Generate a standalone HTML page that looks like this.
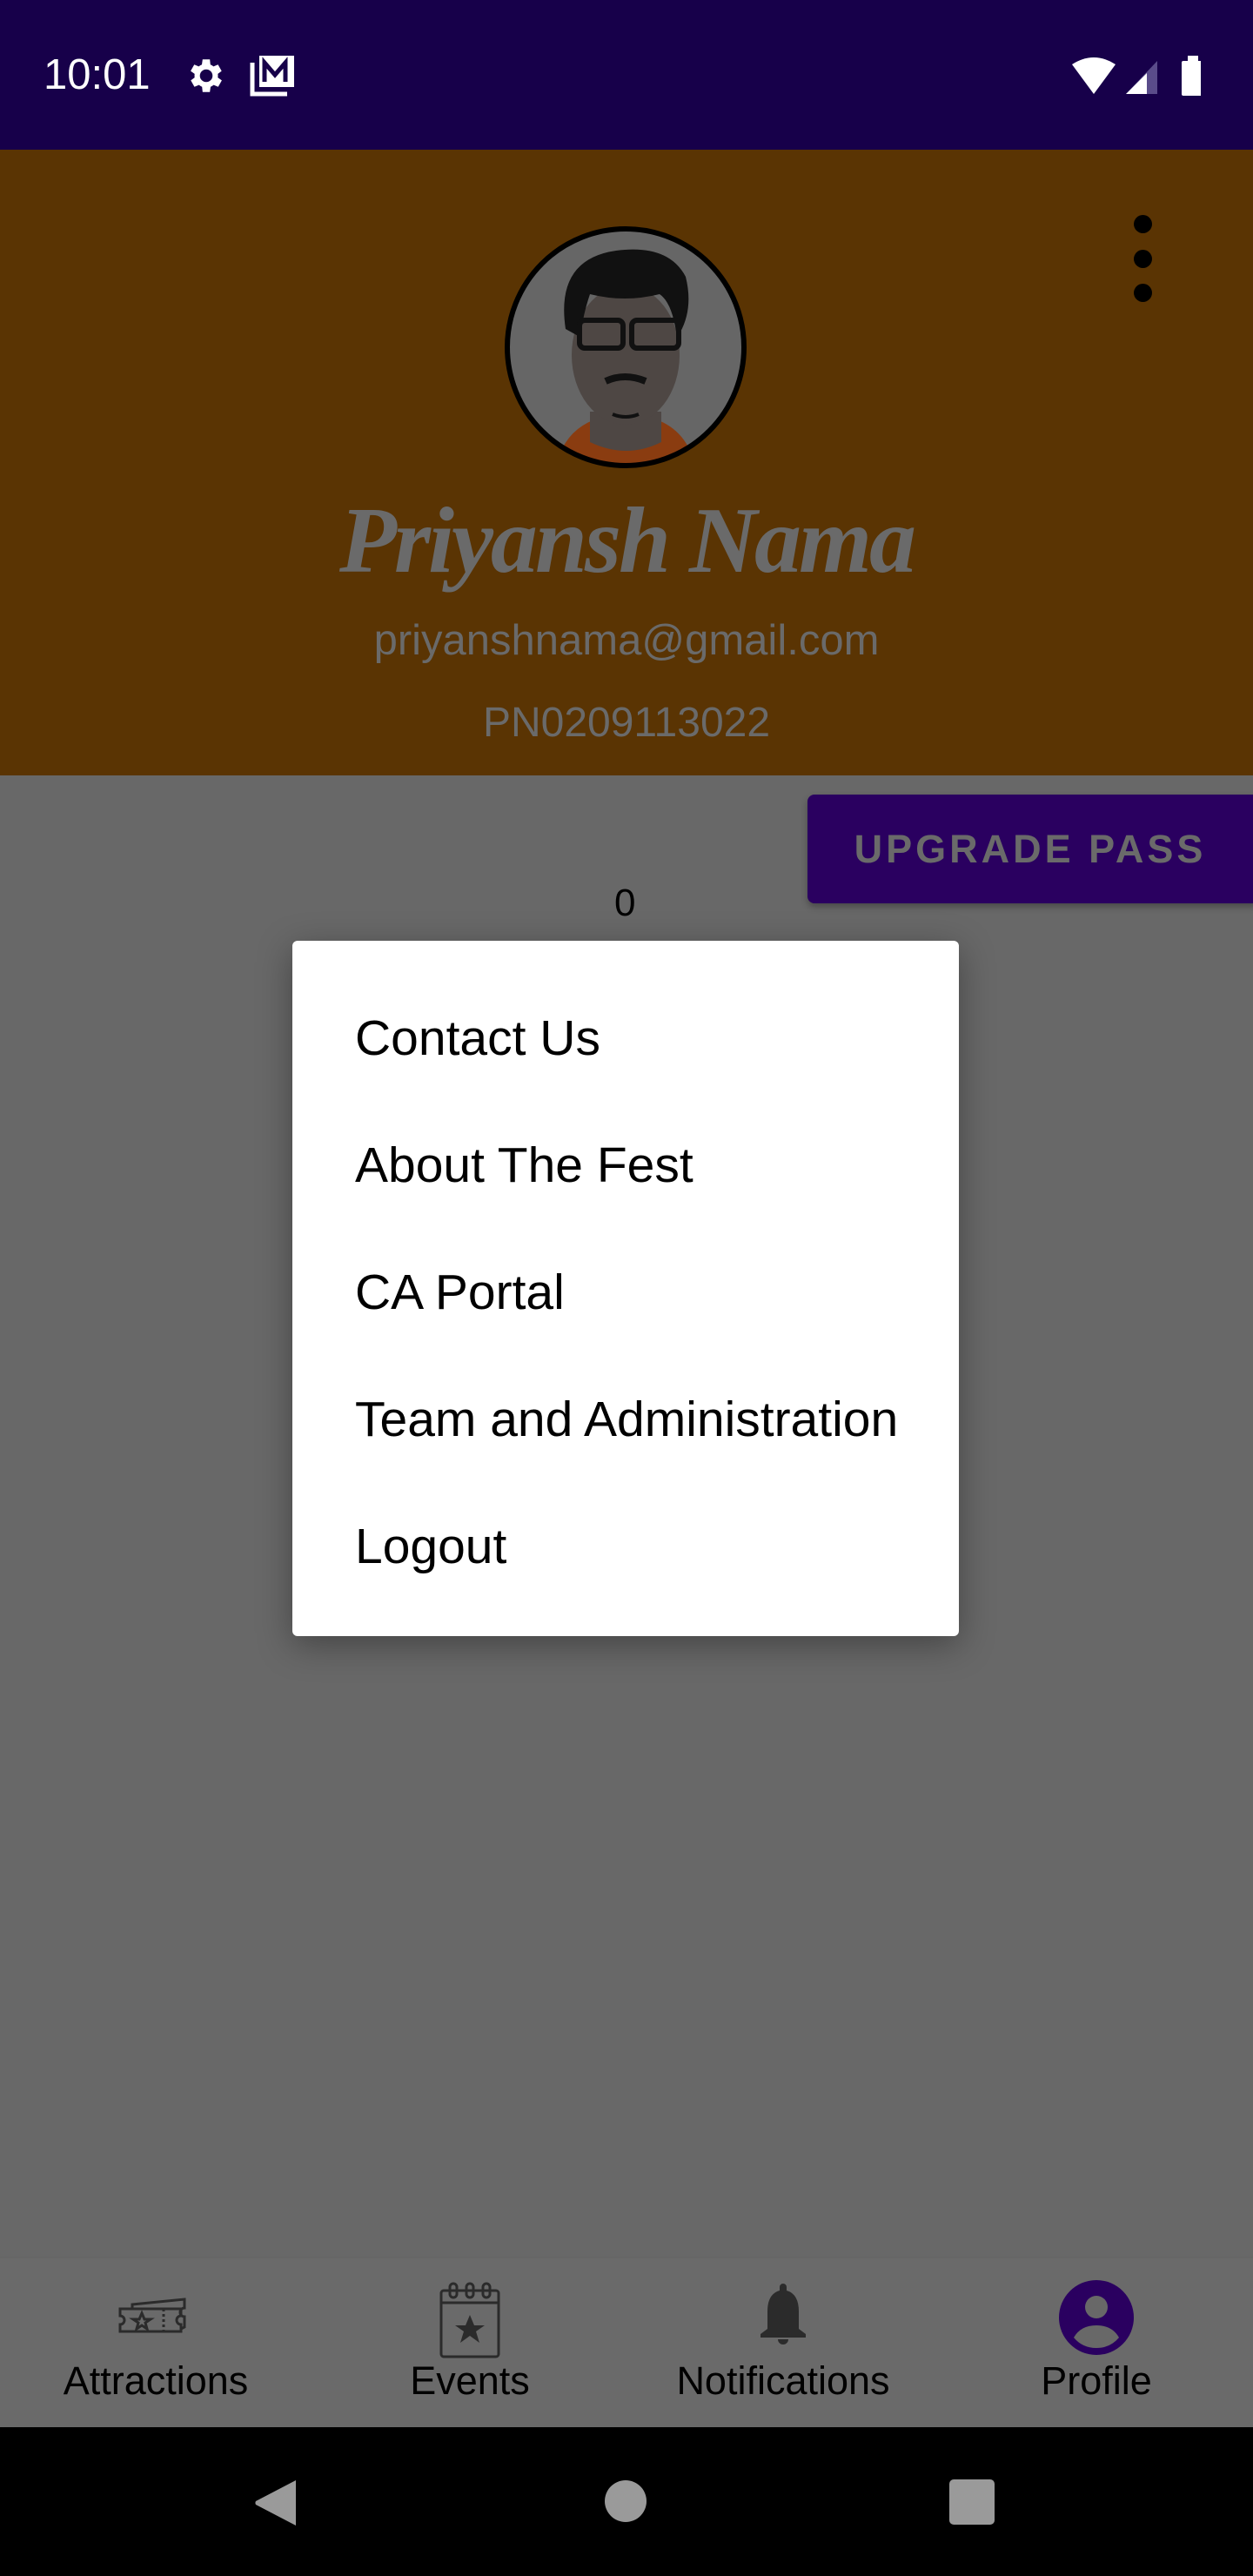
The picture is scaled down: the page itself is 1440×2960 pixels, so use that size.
<!DOCTYPE html>
<html><head><meta charset="utf-8"><style>
*{margin:0;padding:0;box-sizing:border-box}
body{width:1440px;height:2960px;position:relative;overflow:hidden;background:#686868;font-family:"Liberation Sans",sans-serif}
.abs{position:absolute}
.status{left:0;top:0;width:1440px;height:172px;background:#17004a}
.header{left:0;top:172px;width:1440px;height:719px;background:#5a3403}
.t{white-space:nowrap}
.menu{left:336px;top:1081px;width:766px;height:799px;background:#fff;border-radius:6px;box-shadow:0 10px 40px rgba(0,0,0,.35)}
.mi{position:absolute;left:72px;font-size:57px;color:#000;line-height:64px}
.nav{left:0;top:2593px;width:1440px;height:196px;background:#6a6a6a;border-top:2px solid #666}
.lbl{position:absolute;top:2710px;font-size:45px;color:#000;width:300px;text-align:center}
.sys{left:0;top:2789px;width:1440px;height:171px;background:#000}
</style></head><body>
<div class="abs status"></div>
<div class="abs t" style="left:50px;top:58px;font-size:49px;color:#fff">10:01</div>
<svg class="abs" style="left:212px;top:62px" width="50" height="50" viewBox="0 0 24 24"><path fill="#fff" d="M19.4 13a7.5 7.5 0 000-2l2.1-1.6-2-3.5-2.5 1a7.3 7.3 0 00-1.700-1L15 3h-4l-.4 2.9a7.3 7.3 0 00-1.7 1l-2.5-1-2 3.5L6.6 11a7.5 7.5 0 000 2l-2.1 1.6 2 3.5 2.5-1a7.3 7.3 0 001.7 1L11 21h4l.4-2.9a7.3 7.3 0 001.7-1l2.5 1 2-3.5zM13 15.5a3.5 3.5 0 110-7 3.5 3.5 0 010 7z" transform="translate(-1 0)"/></svg>
<svg class="abs" style="left:286px;top:60px" width="56" height="52" viewBox="0 0 28 26"><path fill="none" stroke="#fff" stroke-width="2.5" d="M2 6v18h20"/><rect x="6" y="2" width="20" height="18" fill="#fff"/><path d="M9 17V6l6 7 6-7v11" fill="none" stroke="#17004a" stroke-width="2.5"/></svg>
<svg class="abs" style="left:1230px;top:64px" width="150" height="48" viewBox="0 0 150 48"><path d="M2 10Q27-6 52 10L27 44z" fill="#fff"/><path d="M64 44L100 6v38z" fill="#5a4c8a"/><path d="M64 44L88 20v24z" fill="#fff"/><rect x="128" y="6" width="26" height="40" rx="2" fill="#fff"/><rect x="135" y="0" width="12" height="8" fill="#fff"/></svg>
<div class="abs header"></div>
<div class="abs" style="left:1303px;top:247px;width:21px;height:21px;border-radius:50%;background:#000"></div>
<div class="abs" style="left:1303px;top:287px;width:21px;height:21px;border-radius:50%;background:#000"></div>
<div class="abs" style="left:1303px;top:326px;width:21px;height:21px;border-radius:50%;background:#000"></div>
<svg class="abs" style="left:578px;top:258px" width="282" height="282" viewBox="0 0 282 282">
<defs><clipPath id="c"><circle cx="141" cy="141" r="134"/></clipPath></defs>
<circle cx="141" cy="141" r="138" fill="#666"/>
<g clip-path="url(#c)">
<path d="M60 282Q70 230 120 220h42q50 10 60 62z" fill="#8a3c10"/>
<path d="M100 215h82v35q-40 20-82 0z" fill="#4e4744"/>
<ellipse cx="141" cy="150" rx="62" ry="80" fill="#4e4744"/>
<path d="M72 120Q60 40 130 30q60-8 80 30 10 40-10 70-5-40-20-50-40 10-80 0-10 30-10 50z" fill="#111"/>
<rect x="88" y="110" width="50" height="32" rx="6" fill="none" stroke="#111" stroke-width="6"/>
<rect x="148" y="110" width="54" height="32" rx="6" fill="none" stroke="#111" stroke-width="6"/>
<path d="M118 180q22-10 46 0" stroke="#111" stroke-width="8" fill="none"/>
<path d="M126 218q15 6 30 0" stroke="#111" stroke-width="4" fill="none"/>
</g>
<circle cx="141" cy="141" r="136" fill="none" stroke="#000" stroke-width="6"/>
</svg>
<div class="abs t" style="left:0;width:1440px;text-align:center;top:560px;font-family:'Liberation Serif',serif;font-style:italic;font-weight:bold;font-size:108px;letter-spacing:-3px;color:#6a6a6a">Priyansh Nama</div>
<div class="abs t" style="left:0;width:1440px;text-align:center;top:708px;font-size:49px;color:#6a6a6a">priyanshnama@gmail.com</div>
<div class="abs t" style="left:0;width:1440px;text-align:center;top:803px;font-size:48px;color:#6a6a6a">PN0209113022</div>
<div class="abs" style="left:928px;top:913px;width:520px;height:125px;background:#2a0060;border-radius:8px;box-shadow:0 4px 8px rgba(0,0,0,.3)"></div>
<div class="abs t" style="left:928px;top:950px;width:512px;text-align:center;font-size:45px;letter-spacing:4px;color:#6a6a6a;font-weight:bold">UPGRADE PASS</div>
<div class="abs t" style="left:706px;top:1013px;font-size:44px;color:#000">0</div>
<div class="abs menu">
<div class="mi" style="top:80px">Contact Us</div>
<div class="mi" style="top:226px">About The Fest</div>
<div class="mi" style="top:372px">CA Portal</div>
<div class="mi" style="top:518px">Team and Administration</div>
<div class="mi" style="top:664px">Logout</div>
</div>
<div class="abs nav"></div>
<svg class="abs" style="left:134px;top:2640px" width="90" height="50" viewBox="0 0 90 50"><g fill="none" stroke="#2b2b2b" stroke-width="3"><path d="M4 13h70v8a5 5 0 000 10v8H4v-8a5 5 0 000-10z"/><path d="M18 13V8l60-6v10a5 5 0 000 10v12l-4 2"/><path d="M54 13v26" stroke-dasharray="3 3"/><path d="M29 18l3 7h7l-6 4 2 7-6-4-6 4 2-7-6-4h7z"/></g></svg>
<svg class="abs" style="left:505px;top:2622px" width="70" height="88" viewBox="0 0 70 88"><g fill="none" stroke="#2b2b2b" stroke-width="3"><rect x="2" y="10" width="66" height="76" rx="3"/><path d="M2 24h66"/><rect x="12" y="2" width="8" height="16" rx="4"/><rect x="31" y="2" width="8" height="16" rx="4"/><rect x="50" y="2" width="8" height="16" rx="4"/></g><path d="M35 38l5 12h12l-10 7 4 13-11-8-11 8 4-13-10-7h12z" fill="#2b2b2b"/></svg>
<svg class="abs" style="left:872px;top:2624px" width="56" height="70" viewBox="0 0 56 70"><path d="M28 0a4 4 0 014 4v4q14 4 14 24v20l8 6v4H2v-4l8-6V32q0-20 14-24V4a4 4 0 014-4zM22 64h12a6 6 0 01-12 0z" fill="#2b2b2b"/></svg>
<svg class="abs" style="left:1217px;top:2620px" width="86" height="86" viewBox="0 0 86 86"><circle cx="43" cy="43" r="43" fill="#2a0060"/><circle cx="43" cy="31" r="13" fill="#686868"/><path d="M17 66q8-14 26-14t26 14q-10 12-26 12T17 66z" fill="#686868"/></svg>
<div class="lbl" style="left:29px">Attractions</div>
<div class="lbl" style="left:390px">Events</div>
<div class="lbl" style="left:750px">Notifications</div>
<div class="lbl" style="left:1110px">Profile</div>
<div class="abs sys"></div>
<svg class="abs" style="left:290px;top:2848px" width="52" height="56" viewBox="0 0 52 56"><path d="M50 2v52L4 30a4 4 0 010-4z" fill="#9a9a9a"/></svg>
<div class="abs" style="left:695px;top:2850px;width:48px;height:48px;border-radius:50%;background:#9a9a9a"></div>
<div class="abs" style="left:1091px;top:2849px;width:52px;height:52px;border-radius:5px;background:#9a9a9a"></div>
</body></html>
